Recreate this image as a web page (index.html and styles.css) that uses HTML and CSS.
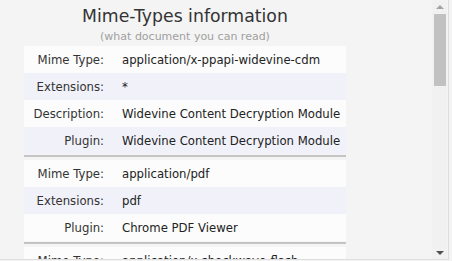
FILE: index.html
```html
<!DOCTYPE html>
<html lang="en">
<head>
    <meta charset="UTF-8">
    <title>Mime-Types information</title>
    <link rel="stylesheet" href="styles.css">
</head>
<body>
    <div class="frame">
        <div class="viewport">
            <div class="content">
                <h1>Mime-Types information</h1>
                <p class="sub">(what document you can read)</p>
                <table class="mimes">
                    <tr><td class="key">Mime Type:</td><td>application/x-ppapi-widevine-cdm</td></tr>
                    <tr class="alt"><td class="key">Extensions:</td><td>*</td></tr>
                    <tr><td class="key">Description:</td><td>Widevine Content Decryption Module</td></tr>
                    <tr class="alt"><td class="key">Plugin:</td><td>Widevine Content Decryption Module</td></tr>
                    <tr class="sep"><td colspan="2"><div class="line"></div></td></tr>

                    <tr><td class="key">Mime Type:</td><td>application/pdf</td></tr>
                    <tr class="alt"><td class="key">Extensions:</td><td>pdf</td></tr>
                    <tr><td class="key">Plugin:</td><td>Chrome PDF Viewer</td></tr>
                    <tr class="sep"><td colspan="2"><div class="line"></div></td></tr>

                    <tr><td class="key">Mime Type:</td><td>application/x-shockwave-flash</td></tr>
                    <tr class="alt"><td class="key">Extensions:</td><td>swf</td></tr>
                    <tr><td class="key">Description:</td><td>Shockwave Flash</td></tr>
                    <tr class="alt"><td class="key">Plugin:</td><td>Shockwave Flash</td></tr>
                </table>
            </div>
        </div>
        <div class="scrollbar">
            <div class="arrow up"></div>
            <div class="track"><div class="thumb"></div></div>
            <div class="arrow down"></div>
        </div>
    </div>
</body>
</html>
```

FILE: styles.css
```css
html, body {
    margin: 0;
    padding: 0;
    background-color: #f4f4f4;
}
.frame {
    display: flex;
    width: 448px;
    height: 259px;
    border-right: 1px solid #dedede;
    border-bottom: 1px solid #dedede;
    background-color: #f4f4f4;
    font-family: 'DejaVu Sans', Verdana, sans-serif;
    color: #333;
}
.viewport {
    width: 432px;
    height: 259px;
    overflow: hidden;
}
.content {
    width: 370px;
    padding: 5px 0 16px;
    text-align: center;
}
h1 {
    margin: 0;
    font-size: 17.3px;
    line-height: 22px;
    font-weight: normal;
    color: #333;
}
.sub {
    margin: 3px 0 0;
    font-size: 11px;
    line-height: 14px;
    color: #a0a0a0;
}
.mimes {
    width: 322px;
    margin: 2px 0 0 24px;
    border-collapse: collapse;
    font-size: 11.7px;
    text-align: left;
}
.mimes tr {
    height: 27px;
    background-color: #fcfcfc;
}
.mimes tr.alt {
    background-color: #f1f1fa;
}
.mimes td {
    padding: 0 0 0 9px;
    color: #222;
}
.mimes td.key {
    width: 80px;
    padding: 0 9px 0 0;
    text-align: right;
    color: #333;
}
.mimes tr.sep {
    height: 6px;
    background-color: #f4f4f4;
}
.mimes tr.sep td {
    padding: 1px 0 3px;
}
.line {
    height: 2px;
    background-color: #c4c4c4;
}

/* drawn scroll bar */
.scrollbar {
    display: flex;
    flex-direction: column;
    width: 15px;
    height: 259px;
    background-color: #f1f1f1;
}
.arrow {
    height: 13px;
    display: flex;
    align-items: center;
    justify-content: center;
}
.arrow::before {
    content: "";
    border-left: 4px solid transparent;
    border-right: 4px solid transparent;
}
.arrow.up::before {
    border-bottom: 4px solid #a3a3a3;
}
.arrow.down::before {
    border-top: 4px solid #505050;
}
.track {
    flex: 1;
    padding: 1px 1px 0 2px;
}
.thumb {
    height: 72px;
    background-color: #c1c1c1;
}
```
